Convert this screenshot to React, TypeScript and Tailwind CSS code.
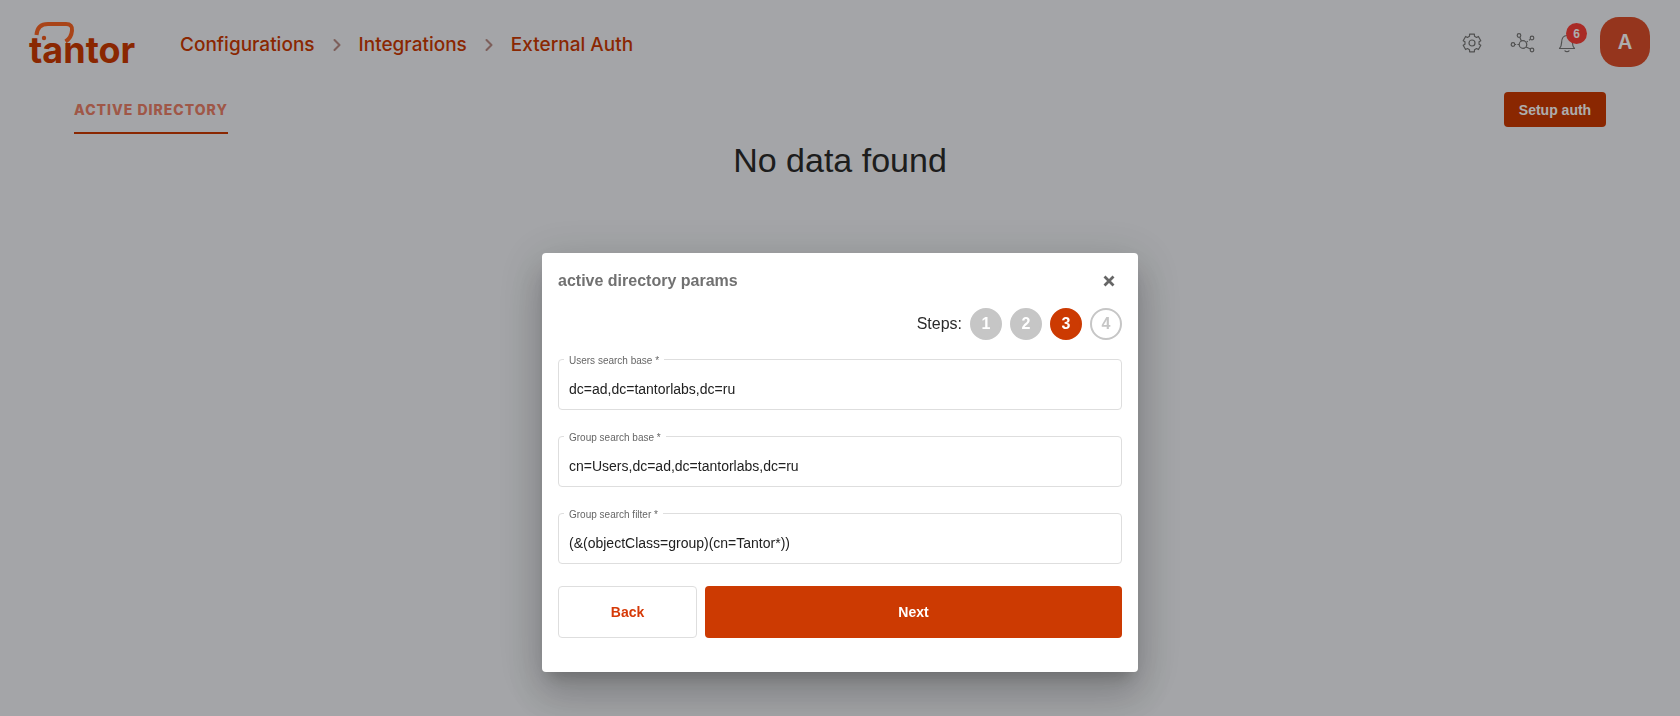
import React, { useState } from 'react';
import { ChevronRight } from 'lucide-react';

interface Field {
  id: string;
  label: string;
  value: string;
}

const crumbs = ['Configurations', 'Integrations', 'External Auth'];

const initialFields: Field[] = [
  { id: 'users-base', label: 'Users search base *', value: 'dc=ad,dc=tantorlabs,dc=ru' },
  { id: 'group-base', label: 'Group search base *', value: 'cn=Users,dc=ad,dc=tantorlabs,dc=ru' },
  { id: 'group-filter', label: 'Group search filter *', value: '(&(objectClass=group)(cn=Tantor*))' },
];

const Logo = () => (
  <svg width="108" height="50" viewBox="0 0 108 50" overflow="visible" role="img" aria-label="tantor">
    <path
      d="M6.500 18C7 11 11 7 18 7H36C40.500 7 42.500 9.500 42 13.500C41.600 19 39.500 22 35.500 24.500"
      fill="none"
      stroke="#fa6524"
      strokeWidth="4"
    />
    <circle cx="14" cy="21" r="2.200" fill="#f05a1c" />
    <text x="-1" y="46" fontFamily="Inter, sans-serif" fontWeight="700" fontSize="36" fill="#cc3a02">
      tantor
    </text>
  </svg>
);

const GearIcon = () => (
  <svg width="20" height="20" viewBox="0 0 20 20" fill="none" stroke="currentColor" strokeWidth="1.200" strokeLinejoin="round">
    <path d="M7.600 1.200H12.400L12.500 3.300L14.550 4.500L16.400 3.500L18.800 7.700L17.050 8.800V11.200L18.800 12.300L16.400 16.500L14.550 15.500L12.500 16.700L12.400 18.800H7.600L7.500 16.700L5.450 15.500L3.600 16.500L1.200 12.300L2.950 11.200V8.800L1.200 7.700L3.600 3.500L5.450 4.500L7.500 3.300Z" />
    <circle cx="10" cy="10" r="3" />
  </svg>
);

const NodesIcon = () => (
  <svg width="26" height="22" viewBox="0 0 26 22" fill="none" stroke="currentColor" strokeWidth="1.200">
    <circle cx="13" cy="12.500" r="3.800" />
    <circle cx="3" cy="12.500" r="1.800" />
    <circle cx="9" cy="3.500" r="1.800" />
    <circle cx="22" cy="6" r="1.800" />
    <circle cx="22" cy="18" r="1.800" />
    <path d="M5 12.500h1.200M7.400 12.500h1.600M9.800 5.200l1.600 3.800M16.600 10l1.200-.8M19 8.300l1.200-.8M16 15l4.500 2" />
  </svg>
);

const BellIcon = () => (
  <svg width="18" height="20" viewBox="0 0 18 20" fill="none" stroke="currentColor" strokeWidth="1.200" strokeLinejoin="round">
    <path d="M1.500 15.500h15c-1.800-1.600-2-3-2.100-6C14.300 5.500 12.500 2.500 9 2.500S3.700 5.500 3.600 9.500c-.1 3-.3 4.400-2.100 6z" />
    <path d="M7 17.800c.8 1.200 3.200 1.200 4 0" strokeLinecap="round" />
  </svg>
);

const Header = () => (
  <header className="flex items-center justify-between px-[30px] pt-[17px]">
    <div className="flex items-center">
      <a href="#home" className="mr-[42px]">
        <Logo />
      </a>
      <nav aria-label="Breadcrumb" className="pt-1.5">
        <ol className="flex items-center font-['Inter',sans-serif] text-[19px] font-medium text-[#cc3a02]">
          {crumbs.map((name, i) => (
            <li key={name} className="flex items-center">
              {i > 0 && <ChevronRight className="mx-3 h-5 w-5 text-[#b98d86]" strokeWidth={2.5} />}
              <a href="#crumb">{name}</a>
            </li>
          ))}
        </ol>
      </nav>
    </div>

    <div className="flex items-center text-[#777]">
      <button type="button" aria-label="Settings" className="pt-0.5">
        <GearIcon />
      </button>
      <button type="button" aria-label="Topology" className="ml-7 pt-0.5">
        <NodesIcon />
      </button>
      <button type="button" aria-label="Notifications" className="relative ml-[22px] pt-0.5">
        <BellIcon />
        <span className="absolute -top-2 left-2 flex h-[21px] w-[21px] items-center justify-center rounded-full bg-[#fa4038] text-xs font-bold text-white">
          6
        </span>
      </button>
      <button
        type="button"
        className="ml-6 h-[50px] w-[50px] rounded-[19px] bg-[#dc4f2b] font-['Inter',sans-serif] text-xl font-semibold text-white"
      >
        A
      </button>
    </div>
  </header>
);

const StepBadge = ({ step, current }: { step: number; current: number }) => {
  let style = 'border-[#c6c6c6] bg-[#c6c6c6] text-white';
  if (step === current) style = 'border-[#cc3a02] bg-[#cc3a02] text-white';
  if (step > current) style = 'border-[#c6c6c6] bg-white text-[#c6c6c6]';

  return (
    <li className={`flex h-8 w-8 items-center justify-center rounded-full border-2 font-bold ${style}`}>
      {step}
    </li>
  );
};

const ParamsDialog = () => {
  const [fields, setFields] = useState(initialFields);

  const handleChange = (id: string, value: string) => {
    setFields(fields.map((f) => (f.id === id ? { ...f, value } : f)));
  };

  return (
    <div className="fixed inset-0 flex items-start justify-center bg-black/32 pt-[253px]">
      <form
        role="dialog"
        aria-labelledby="dialog-title"
        className="w-full max-w-[596px] rounded bg-white px-4 pt-4 pb-[34px] shadow-[0_11px_15px_-7px_rgba(0,0,0,0.2),0_24px_38px_3px_rgba(0,0,0,0.14),0_9px_46px_8px_rgba(0,0,0,0.12)]"
      >
        <div className="flex h-6 items-center justify-between">
          <h2 id="dialog-title" className="text-base font-bold text-[#717171]">
            active directory params
          </h2>
          <button type="button" aria-label="Close" className="mr-[7px] text-[#666]">
            <svg width="12" height="12" viewBox="0 0 12 12" stroke="currentColor" strokeWidth="2.800">
              <path d="M1.500 1.500l9 9M10.500 1.500l-9 9" />
            </svg>
          </button>
        </div>

        {/* Progress */}
        <div className="mt-[15px] flex items-center justify-end gap-2">
          <span>Steps:</span>
          <ol className="flex gap-2">
            {[1, 2, 3, 4].map((step) => (
              <StepBadge key={step} step={step} current={3} />
            ))}
          </ol>
        </div>

        <div className="mt-[11px] flex flex-col gap-[18px]">
          {fields.map((f) => (
            <fieldset key={f.id} className="rounded border border-[#dedede] px-[5px]">
              <legend className="px-[5px] pt-1 text-[10px] leading-3 text-[#666]">
                <label htmlFor={f.id} className="block">
                  {f.label}
                </label>
              </legend>
              <input
                id={f.id}
                value={f.value}
                onChange={(e) => handleChange(f.id, e.target.value)}
                className="block h-[42px] w-full px-[5px] pt-0.5 text-sm text-[#212121] outline-none"
              />
            </fieldset>
          ))}
        </div>

        <div className="mt-[22px] flex gap-2 text-sm font-bold">
          <button type="button" className="h-[52px] w-[139px] rounded border border-[#dedede] text-[#d63a08]">
            Back
          </button>
          <button type="button" className="h-[52px] flex-1 rounded bg-[#cc3a02] text-white">
            Next
          </button>
        </div>
      </form>
    </div>
  );
};

export default function App() {
  return (
    <div className="min-h-screen bg-[#f2f4f8] font-['Liberation_Sans',Arial,sans-serif] text-[#2b2b2b]">
      <Header />
      <main className="px-[74px] pt-[25px]">
        <div className="flex items-start justify-between">
          <a
            href="#active-directory"
            className="border-b-2 border-[#cc3a02] pt-2 pb-3 font-['Inter',sans-serif] text-sm leading-5 font-extrabold tracking-[1px] text-[#ea8069]"
          >
            ACTIVE DIRECTORY
          </a>
          <button type="button" className="h-[35px] w-[102px] rounded bg-[#cc3a02] text-sm font-bold text-white">
            Setup auth
          </button>
        </div>
        <h1 className="mt-[5px] text-center text-[34px] leading-[42px]">No data found</h1>
      </main>
      <ParamsDialog />
    </div>
  );
}
